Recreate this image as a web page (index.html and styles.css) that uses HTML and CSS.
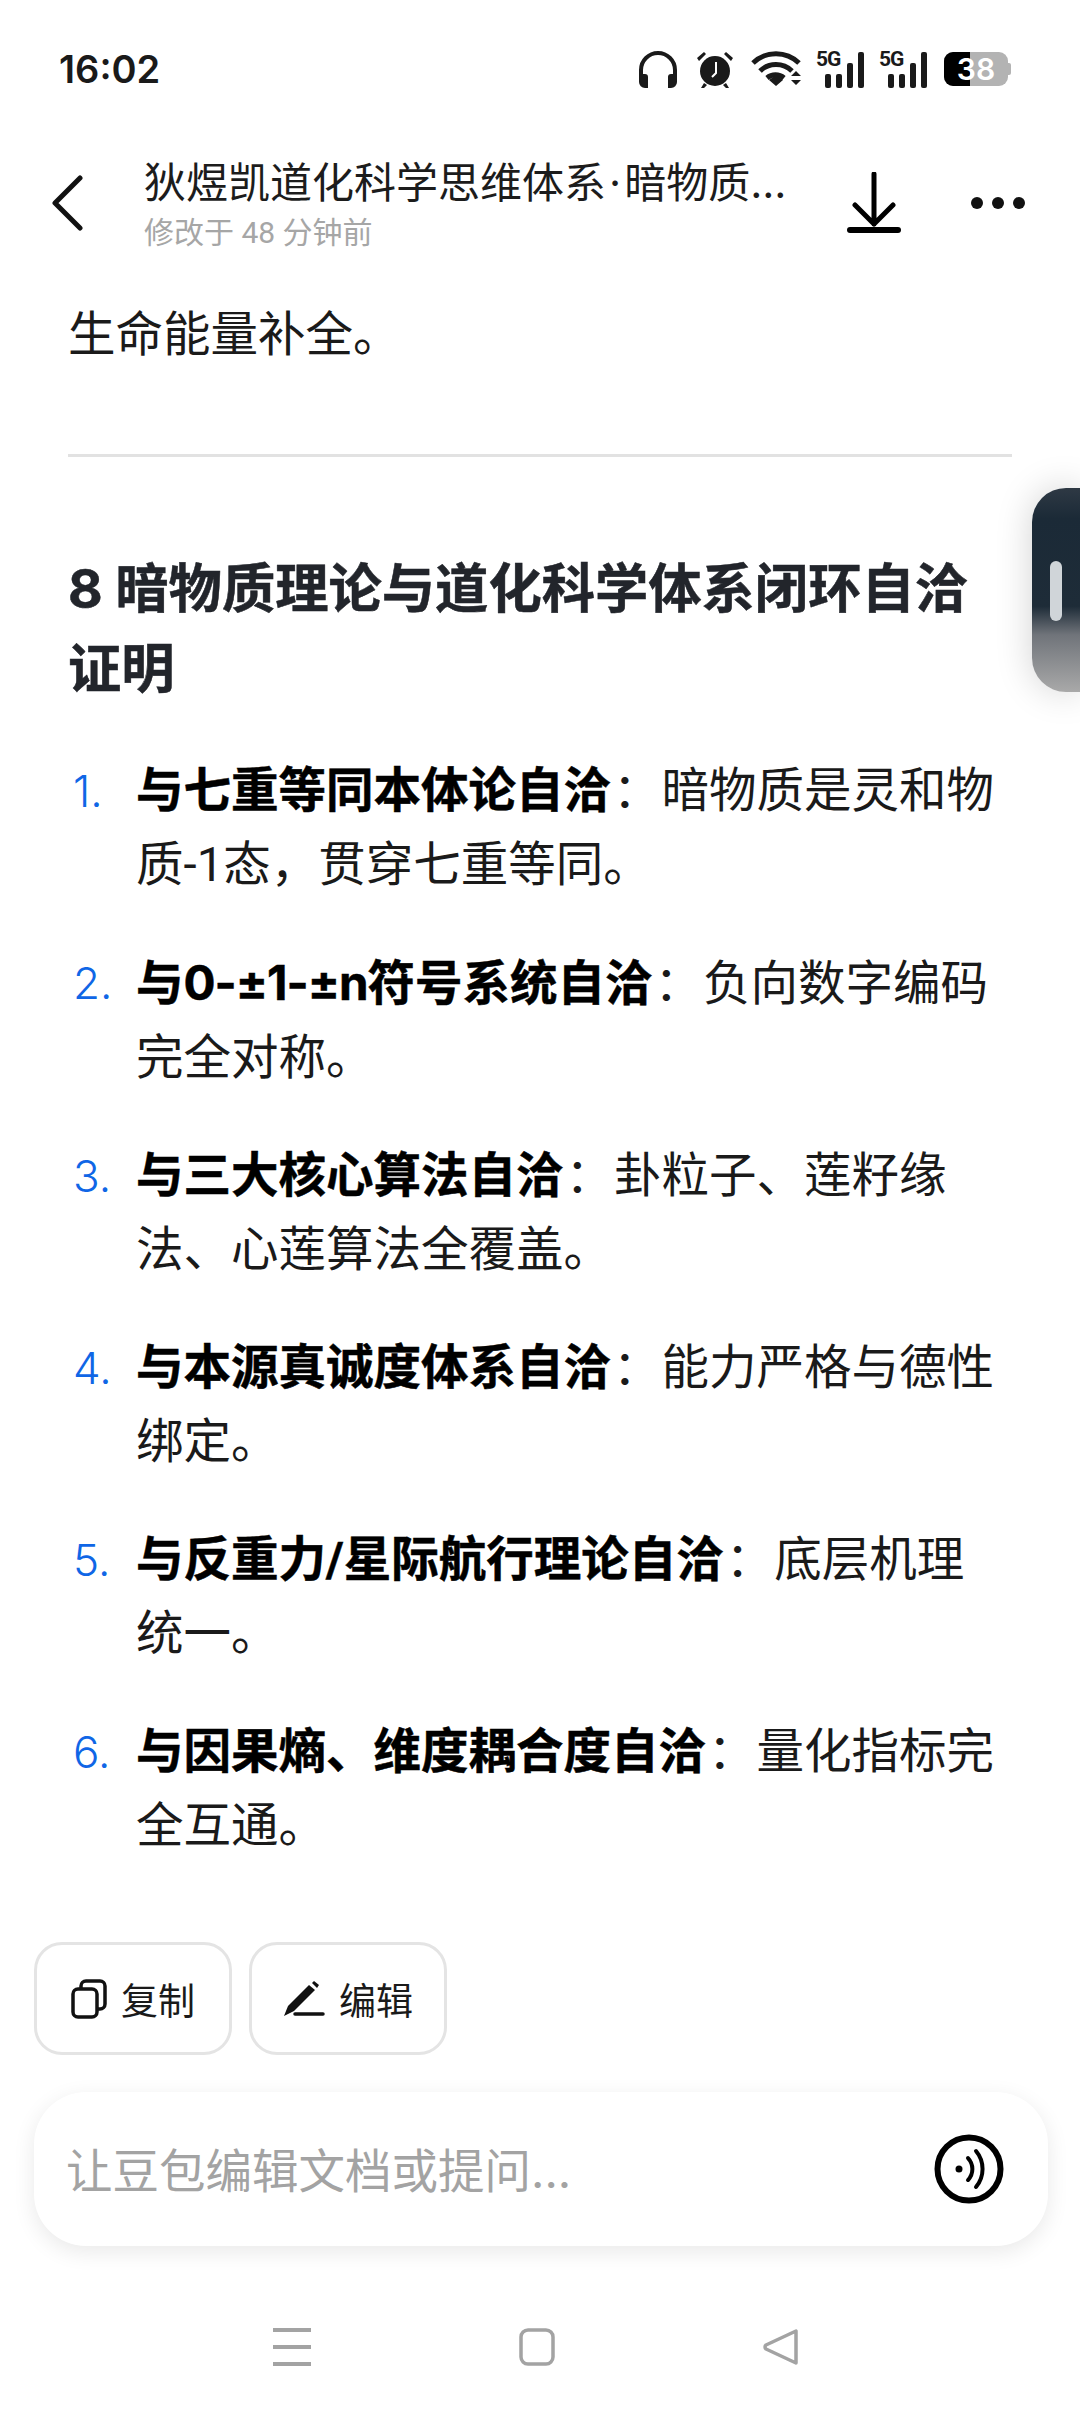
FILE: index.html
```html
<!DOCTYPE html>
<html lang="zh-CN">
<head>
    <meta charset="UTF-8">
    <meta name="viewport" content="width=device-width, initial-scale=1.0">
    <title>暗物质理论与道化科学体系</title>
    <link rel="stylesheet" href="styles.css">
</head>
<body>
    <div class="status-bar">
        <span class="status-time">16:02</span>
        <div class="status-icons">
            <svg class="icon-headphones" width="40" height="38" viewBox="0 0 40 38">
                <path d="M3 25V20a17 17 0 0 1 34 0v5" fill="none" stroke="#1a1a1a" stroke-width="4"/>
                <path d="M1 24h6a3 3 0 0 1 3 3v11H7a6 6 0 0 1-6-6zM39 24h-6a3 3 0 0 0-3 3v11h3a6 6 0 0 0 6-6z" fill="#1a1a1a"/>
            </svg>
            <svg class="icon-alarm" width="38" height="38" viewBox="0 0 38 38">
                <circle cx="19" cy="21" r="15" fill="#1a1a1a"/>
                <path d="M1 8l7-6 2 2-7 7zM37 8l-7-6-2 2 7 7z" fill="#1a1a1a"/>
                <path d="M8 33l-3 5h3l3-3zM30 33l3 5h-3l-3-3z" fill="#1a1a1a"/>
                <path d="M20 12v11l-4 4" fill="none" stroke="#fff" stroke-width="2"/>
            </svg>
            <svg class="icon-wifi" width="53" height="36" viewBox="0 0 53 36">
                <path d="M2 12a33 33 0 0 1 46 0M9 20a23 23 0 0 1 32 0M16 27a13 13 0 0 1 17 0" fill="none" stroke="#1a1a1a" stroke-width="5"/>
                <path d="M18 29l7-5 7 5-7 6zM40 25l5-5 5 5zM40 29l5 5 5-5z" fill="#1a1a1a"/>
            </svg>
            <div class="signal">
                <span class="signal-label">5G</span>
                <span class="bar bar-1"></span><span class="bar bar-2"></span><span class="bar bar-3"></span><span class="bar bar-4"></span>
            </div>
            <div class="signal">
                <span class="signal-label">5G</span>
                <span class="bar bar-1"></span><span class="bar bar-2"></span><span class="bar bar-3"></span><span class="bar bar-4"></span>
            </div>
            <div class="battery">
                <div class="battery-body"><div class="battery-level"></div><span class="battery-text">38</span></div>
                <div class="battery-cap"></div>
            </div>
        </div>
    </div>

    <header class="doc-header">
        <svg class="back-icon" width="36" height="56" viewBox="0 0 36 56">
            <path d="M31 3L6 28l25 25" fill="none" stroke="#111" stroke-width="5" stroke-linecap="round" stroke-linejoin="round"/>
        </svg>
        <div class="doc-title-box">
            <div class="doc-title">狄煜凯道化科学思维体系<span class="title-dot">·</span>暗物质...</div>
            <div class="doc-subtitle">修改于 48 分钟前</div>
        </div>
        <svg class="download-icon" width="54" height="62" viewBox="0 0 54 62">
            <path d="M27 2v50M8 33l19 19 19-19" fill="none" stroke="#000" stroke-width="5" stroke-linecap="round" stroke-linejoin="round"/>
            <path d="M3 58h48" stroke="#000" stroke-width="6" stroke-linecap="round"/>
        </svg>
        <div class="more-dots"><span></span><span></span><span></span></div>
    </header>

    <main class="doc-body">
        <p class="lead-line">生命能量补全。</p>
        <hr class="divider">
        <h2 class="section-title">8 暗物质理论与道化科学体系闭环自洽证明</h2>
        <ol class="proof-list">
            <li class="proof-item"><span class="num">1.</span><p><b>与七重等同本体论自洽</b><span class="colon">：</span>暗物质是灵和物质-1态，贯穿七重等同。</p></li>
            <li class="proof-item"><span class="num">2.</span><p><b>与<span class="latin">0-±1-±n</span>符号系统自洽</b><span class="colon">：</span>负向数字编码完全对称。</p></li>
            <li class="proof-item"><span class="num">3.</span><p><b>与三大核心算法自洽</b><span class="colon">：</span>卦粒子、莲籽缘法、心莲算法全覆盖。</p></li>
            <li class="proof-item"><span class="num">4.</span><p><b>与本源真诚度体系自洽</b><span class="colon">：</span>能力严格与德性绑定。</p></li>
            <li class="proof-item"><span class="num">5.</span><p><b>与反重力/星际航行理论自洽</b><span class="colon">：</span>底层机理统一。</p></li>
            <li class="proof-item"><span class="num">6.</span><p><b>与因果熵、维度耦合度自洽</b><span class="colon">：</span>量化指标完全互通。</p></li>
        </ol>
    </main>

    <div class="side-handle"><span></span></div>

    <div class="action-row">
        <button class="action-btn">
            <svg width="36" height="40" viewBox="0 0 36 40">
                <rect x="2" y="10" width="24" height="28" rx="5" fill="none" stroke="#111" stroke-width="3.5"/>
                <path d="M10 9V7a5 5 0 0 1 5-5h14a5 5 0 0 1 5 5v18a5 5 0 0 1-5 5h-2" fill="none" stroke="#111" stroke-width="3.5"/>
            </svg>
            复制
        </button>
        <button class="action-btn">
            <svg width="42" height="36" viewBox="0 0 42 36">
                <path d="M1 35l4-10L26 4l6 5-21 21z" fill="#111"/>
                <path d="M29 2l2-2 5 4-2 3z" fill="#111"/>
                <path d="M12 33h28" stroke="#111" stroke-width="3.5" stroke-linecap="round"/>
            </svg>
            编辑
        </button>
    </div>

    <div class="ask-box">
        <span class="ask-placeholder">让豆包编辑文档或提问...</span>
        <svg width="70" height="70" viewBox="0 0 70 70">
            <circle cx="35" cy="35" r="31.5" fill="none" stroke="#000" stroke-width="6"/>
            <circle cx="25" cy="35" r="3.5" fill="#000"/>
            <path d="M34 24a16 16 0 0 1 0 22M42 17a28 28 0 0 1 0 36" fill="none" stroke="#000" stroke-width="4" stroke-linecap="round"/>
        </svg>
    </div>

    <nav class="nav-bar">
        <svg width="38" height="38" viewBox="0 0 38 38">
            <path d="M0 2h38M0 19h38M0 36h38" stroke="#a3a3a3" stroke-width="4"/>
        </svg>
        <svg width="36" height="38" viewBox="0 0 36 38">
            <rect x="2" y="2" width="32" height="34" rx="7" fill="none" stroke="#a3a3a3" stroke-width="3.5"/>
        </svg>
        <svg width="36" height="38" viewBox="0 0 36 38">
            <path d="M33 3v32L3 21a2.5 2.5 0 0 1 0-4z" fill="none" stroke="#a3a3a3" stroke-width="3.5" stroke-linejoin="round"/>
        </svg>
    </nav>
</body>
</html>
```
FILE: styles.css
```css
* {
    box-sizing: border-box;
}

body {
    font-family: "Inter", "Noto Sans CJK SC", sans-serif;
    margin: 0;
    width: 1080px;
    height: 2412px;
    background-color: #ffffff;
    color: #111111;
    position: relative;
    overflow: hidden;
    display: flex;
    flex-direction: column;
}

.status-bar {
    height: 140px;
    padding: 50px 69px 0 59px;
    display: flex;
    justify-content: space-between;
    align-items: flex-start;
}

.status-time {
    font-size: 38px;
    line-height: 38px;
    font-weight: 600;
    color: #1a1a1a;
}

.status-icons {
    display: flex;
    align-items: center;
    height: 38px;
    gap: 12px;
}

.icon-alarm {
    margin-left: 6px;
}

.icon-wifi {
    margin-left: 5px;
}

.signal {
    width: 48px;
    height: 37px;
    position: relative;
    display: flex;
    align-items: flex-end;
    justify-content: flex-end;
    gap: 5px;
    margin-right: 3px;
}

.signal-label {
    position: absolute;
    left: 0;
    top: -3px;
    font-family: "Roboto", sans-serif;
    font-size: 21px;
    line-height: 22px;
    font-weight: 700;
    letter-spacing: -1px;
    color: #1a1a1a;
}

.bar {
    width: 6px;
    background-color: #1a1a1a;
    border-radius: 2px;
}

.bar-1 {
    height: 14px;
}

.bar-2 {
    height: 14px;
}

.bar-3 {
    height: 25px;
}

.bar-4 {
    height: 36px;
}

.battery {
    display: flex;
    align-items: center;
    margin-left: 2px;
}

.battery-body {
    width: 64px;
    height: 34px;
    border-radius: 9px;
    background-color: #b3b3b3;
    position: relative;
    overflow: hidden;
    display: flex;
    align-items: center;
    justify-content: center;
}

.battery-level {
    position: absolute;
    left: 0;
    top: 0;
    bottom: 0;
    width: 26px;
    background-color: #000000;
}

.battery-text {
    position: relative;
    color: #ffffff;
    font-size: 30px;
    font-weight: 600;
    line-height: 34px;
}

.battery-cap {
    width: 3px;
    height: 12px;
    background-color: #b3b3b3;
    border-radius: 0 2px 2px 0;
}

.doc-header {
    height: 125px;
    display: flex;
    align-items: center;
    padding: 0 54px 0 49px;
}

.back-icon {
    flex: none;
}

.doc-title-box {
    width: 660px;
    margin-left: 59px;
    flex: none;
}

.doc-title {
    font-size: 42px;
    line-height: 60px;
    color: #1c1c1c;
    white-space: nowrap;
}

.title-dot {
    padding: 0 3px;
}

.doc-subtitle {
    font-family: "Roboto", "Noto Sans CJK SC", sans-serif;
    font-size: 30px;
    line-height: 40px;
    color: #a6a6a6;
}

.download-icon {
    margin-left: 43px;
    flex: none;
}

.more-dots {
    margin-left: 70px;
    display: flex;
    gap: 9px;
}

.more-dots span {
    width: 12px;
    height: 12px;
    border-radius: 50%;
    background-color: #111111;
}

.doc-body {
    flex: 1;
    padding: 0 68px;
    overflow: hidden;
}

.lead-line {
    margin: 0;
    font-size: 47.5px;
    line-height: 74px;
    color: #1a1a1a;
    padding-top: 32px;
}

.divider {
    border: none;
    height: 3px;
    background-color: #e2e2e2;
    margin: 83px 0 0;
}

.section-title {
    margin: 92px 0 0;
    font-size: 53.3px;
    line-height: 80px;
    font-weight: 700;
    color: #22252b;
    -webkit-text-stroke: 0.5px #22252b;
}

.proof-list {
    list-style: none;
    margin: 45px 0 0;
    padding: 0;
    display: flex;
    flex-direction: column;
    gap: 44px;
    font-family: "Roboto", "Noto Sans CJK SC", sans-serif;
}

.proof-item {
    display: flex;
    font-size: 47.5px;
    line-height: 74px;
}

.num {
    flex: none;
    width: 68px;
    padding-left: 5px;
    color: #0f66e6;
    font-family: "Inter", sans-serif;
    font-size: 44px;
    font-weight: 300;
}

.proof-item p {
    margin: 0;
    padding-right: 12px;
    color: #1a1a1a;
}

.proof-item b {
    font-weight: 700;
    color: #000000;
    -webkit-text-stroke: 0.5px #000000;
}

.latin {
    font-family: "Inter", sans-serif;
    letter-spacing: -1px;
}

.colon {
    padding-left: 2px;
    letter-spacing: 1px;
}

.side-handle {
    position: absolute;
    left: 1032px;
    top: 488px;
    width: 48px;
    height: 204px;
    border-radius: 34px 0 0 34px;
    background: linear-gradient(to bottom, #2e3944 0%, #1b2a37 15%, #1e2c38 58%, #70747a 72%, #a9a9a9 100%);
    box-shadow: 0 0 36px rgba(0, 0, 0, 0.18);
}

.side-handle span {
    position: absolute;
    left: 18px;
    top: 73px;
    width: 12px;
    height: 60px;
    border-radius: 6px;
    background-color: #d0d5d9;
}

.action-row {
    display: flex;
    gap: 17px;
    padding-left: 34px;
}

.action-btn {
    width: 198px;
    height: 113px;
    background-color: #ffffff;
    border: 3px solid #e4e4e4;
    border-radius: 28px;
    display: flex;
    align-items: center;
    justify-content: center;
    gap: 14px;
    font-family: "Noto Sans CJK SC", sans-serif;
    font-size: 37px;
    color: #1a1a1a;
    padding: 0;
}

.ask-box {
    margin: 37px 32px 0 34px;
    height: 154px;
    border-radius: 52px;
    background-color: #ffffff;
    box-shadow: 0 6px 22px rgba(0, 0, 0, 0.09);
    display: flex;
    align-items: center;
    justify-content: space-between;
    padding: 0 44px 0 32px;
}

.ask-placeholder {
    font-size: 46.5px;
    color: #a3a3a3;
    margin-bottom: 4px;
}

.nav-bar {
    height: 166px;
    display: flex;
    align-items: center;
    justify-content: center;
    gap: 208px;
    padding: 36px 8px 0 0;
}
```
